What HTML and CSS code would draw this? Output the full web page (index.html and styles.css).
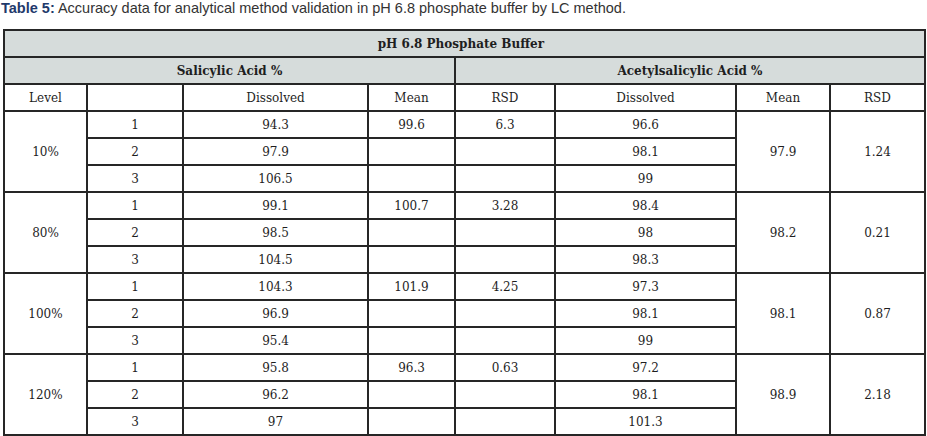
FILE: index.html
```html
<!DOCTYPE html>
<html>
<head>
<meta charset="utf-8">
<link rel="stylesheet" href="styles.css">
</head>
<body>
<p class="caption"><b>Table 5:</b> Accuracy data for analytical method validation in pH 6.8 phosphate buffer by LC method.</p>
<table class="data">
<colgroup>
<col class="c1"><col class="c2"><col class="c3"><col class="c4"><col class="c5"><col class="c6"><col class="c7"><col class="c8">
</colgroup>
<tr class="head"><th colspan="8" class="title">pH 6.8 Phosphate Buffer</th></tr>
<tr class="head"><th colspan="4">Salicylic Acid %</th><th colspan="4">Acetylsalicylic Acid %</th></tr>
<tr><td>Level</td><td></td><td>Dissolved</td><td>Mean</td><td>RSD</td><td>Dissolved</td><td>Mean</td><td>RSD</td></tr>

<tr><td rowspan="3">10%</td><td>1</td><td>94.3</td><td>99.6</td><td>6.3</td><td>96.6</td><td rowspan="3">97.9</td><td rowspan="3">1.24</td></tr>
<tr><td>2</td><td>97.9</td><td></td><td></td><td>98.1</td></tr>
<tr><td>3</td><td>106.5</td><td></td><td></td><td>99</td></tr>

<tr><td rowspan="3">80%</td><td>1</td><td>99.1</td><td>100.7</td><td>3.28</td><td>98.4</td><td rowspan="3">98.2</td><td rowspan="3">0.21</td></tr>
<tr><td>2</td><td>98.5</td><td></td><td></td><td>98</td></tr>
<tr><td>3</td><td>104.5</td><td></td><td></td><td>98.3</td></tr>

<tr><td rowspan="3">100%</td><td>1</td><td>104.3</td><td>101.9</td><td>4.25</td><td>97.3</td><td rowspan="3">98.1</td><td rowspan="3">0.87</td></tr>
<tr><td>2</td><td>96.9</td><td></td><td></td><td>98.1</td></tr>
<tr><td>3</td><td>95.4</td><td></td><td></td><td>99</td></tr>

<tr><td rowspan="3">120%</td><td>1</td><td>95.8</td><td>96.3</td><td>0.63</td><td>97.2</td><td rowspan="3">98.9</td><td rowspan="3">2.18</td></tr>
<tr><td>2</td><td>96.2</td><td></td><td></td><td>98.1</td></tr>
<tr><td>3</td><td>97</td><td></td><td></td><td>101.3</td></tr>
</table>
</body>
</html>
```
FILE: styles.css
```css
html, body {
  margin: 0;
  padding: 0;
  background: #fff;
}
.caption {
  margin: 0;
  padding: 0 0 0 1px;
  height: 28px;
  font-family: "Liberation Sans", Arial, sans-serif;
  font-size: 14.5px;
  line-height: 16px;
  color: #333;
}
.caption b {
  color: #1f3a6b;
}
.data {
  margin-left: 3px;
  margin-top: 1px;
  border-collapse: collapse;
  table-layout: fixed;
  width: 922px;
  font-family: "DejaVu Serif", Cambria, serif;
  font-size: 12px;
  color: #1e1e1e;
}
.data td, .data th {
  border: 2px solid #262626;
  height: 23px;
  padding: 0;
  text-align: center;
  vertical-align: middle;
}
.data tr { height: 27px; }
.data th {
  background: #d6dcdb;
  font-weight: bold;
}
.data th.title {
  text-align: right;
  padding-right: 380px;
}
.c1 { width: 83px; }
.c2 { width: 96px; }
.c3 { width: 185px; }
.c4 { width: 87px; }
.c5 { width: 100px; }
.c6 { width: 181px; }
.c7 { width: 94px; }
.c8 { width: 95px; }
```
